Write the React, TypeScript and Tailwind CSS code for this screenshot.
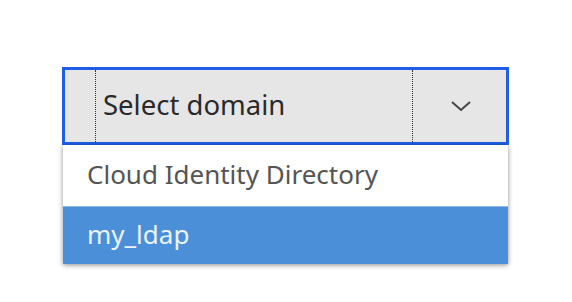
import React from "react";

export default function App() {
  return (
    <div className="w-[572px] h-[302px] bg-white relative" style={{ fontFamily: '"Noto Sans", "Open Sans", sans-serif' }}>
      <div className="pt-[67px] pl-[62px]">
        <div className="w-[447px] h-[78px] border-[3px] border-[#1f5fe8] bg-[#e6e6e6] flex">
          <div className="w-[31px] border-r border-dotted border-[#333]" />
          <div className="flex-1 flex items-center pl-[7px] text-[27.5px] text-[#2a2a2a] border-r border-dotted border-[#333] leading-none pb-[2px]">
            Select domain
          </div>
          <div className="w-[93px] flex items-center justify-center pl-[3px]">
            <svg width="22" height="12" viewBox="0 0 22 12">
              <path d="M2 2 L11 10 L20 2" fill="none" stroke="#444" strokeWidth="2" />
            </svg>
          </div>
        </div>
        <div className="ml-px w-[445px] bg-white shadow-[0_1px_5px_rgba(0,0,0,0.45)]">
          <div className="h-[61px] flex items-center pl-[24px] text-[26px] text-[#555] pb-[2px]">
            Cloud Identity Directory
          </div>
          <div className="h-[58px] flex items-center pl-[24px] text-[26px] text-[#eaf2fb] bg-[#4a8fd8] border-t border-[#8fb9e6] pb-[2px]">
            my_ldap
          </div>
        </div>
      </div>
    </div>
  );
}
